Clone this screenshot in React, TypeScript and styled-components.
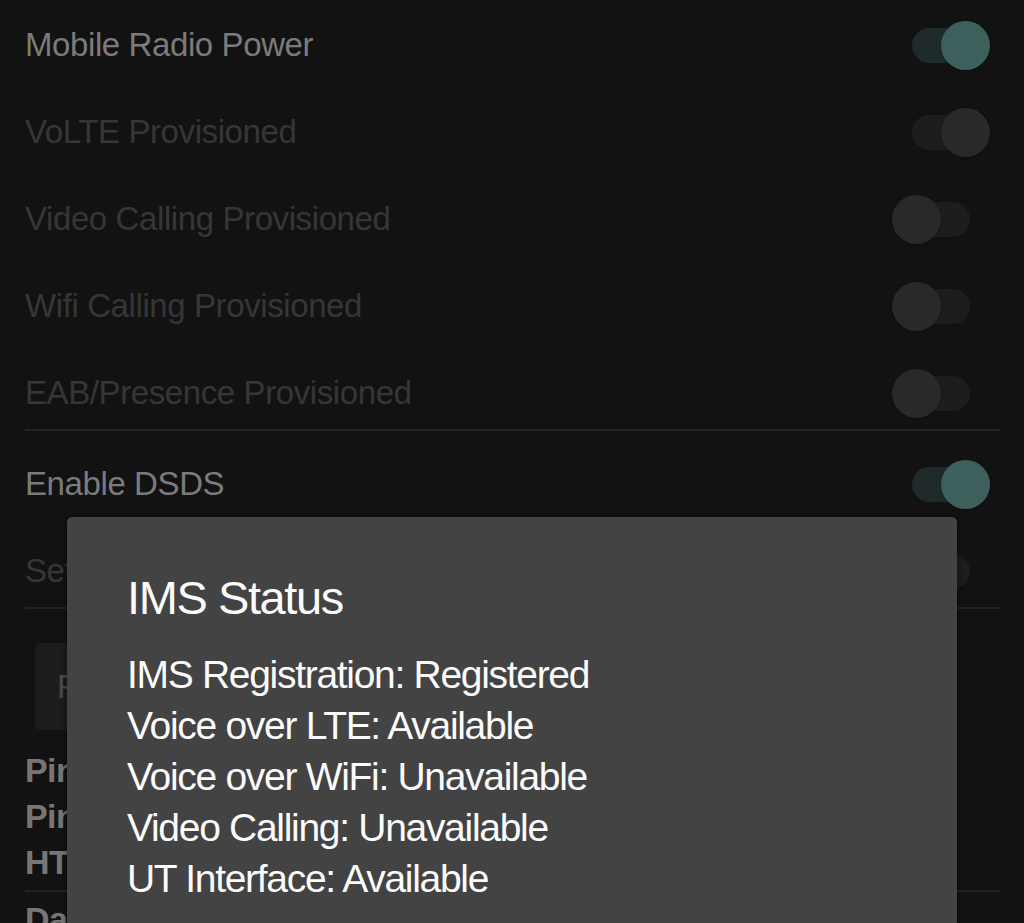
import React from "react";
import styled, { createGlobalStyle } from "styled-components";

const Global = createGlobalStyle`
  html, body {
    margin: 0;
    padding: 0;
    background: #121212;
    overflow: hidden;
  }
  body {
    font-family: "Liberation Sans", Arial, sans-serif;
  }
`;

const Screen = styled.div`
  position: relative;
  width: 1024px;
  height: 923px;
  overflow: hidden;
  background: #121212;
`;

const Section = styled.div<{ $top: number }>`
  display: flex;
  flex-direction: column;
  gap: 15px;
  padding: ${(p) => p.$top}px 24px 0 25px;
`;

const Row = styled.div`
  display: flex;
  align-items: center;
  justify-content: space-between;
  height: 72px;
  padding-right: 10px;
`;

const Label = styled.span<{ $disabled?: boolean }>`
  font-size: 33px;
  letter-spacing: -0.4px;
  color: ${(p) => (p.$disabled ? "#363636" : "#7b7b7b")};
  white-space: nowrap;
`;

const Divider = styled.div`
  height: 2px;
  margin: 0 24px 0 25px;
  background: #232323;
`;

const SwitchBox = styled.div`
  position: relative;
  display: flex;
  align-items: center;
  width: 98px;
  height: 49px;
  padding: 0 20px;
  box-sizing: border-box;
  flex: none;
`;

const Track = styled.div<{ $active: boolean }>`
  width: 58px;
  height: 35px;
  border-radius: 18px;
  background: ${(p) => (p.$active ? "#1f2b2a" : "#1d1d1d")};
`;

const Knob = styled.div<{ $on: boolean; $active: boolean }>`
  position: absolute;
  top: 0;
  left: ${(p) => (p.$on ? 49 : 0)}px;
  width: 49px;
  height: 49px;
  border-radius: 50%;
  background: ${(p) => (p.$active ? "#3d605d" : "#292929")};
  box-shadow: 0 1px 2px rgba(0, 0, 0, 0.35);
`;

const Switch = ({ on, active }: { on: boolean; active?: boolean }) => (
  <SwitchBox>
    <Track $active={!!active} />
    <Knob $on={on} $active={!!active} />
  </SwitchBox>
);

const Lower = styled.div`
  display: flex;
  flex-direction: column;
  padding: 34px 24px 0 25px;
`;

const PingButton = styled.div`
  display: flex;
  align-items: center;
  width: 340px;
  height: 87px;
  margin-left: 10px;
  padding-left: 22px;
  box-sizing: border-box;
  border-radius: 6px;
  background: #1c1c1c;
  font-size: 33px;
  color: #4a4a4a;
`;

const InfoList = styled.div`
  display: flex;
  flex-direction: column;
  margin-top: 17px;
`;

const InfoLine = styled.div`
  height: 46px;
  line-height: 46px;
  font-size: 34px;
  font-weight: 700;
  letter-spacing: -0.6px;
  color: #767676;
  white-space: nowrap;
`;

const LowerDivider = styled.div`
  height: 2px;
  margin: 5px 0 4px;
  background: #232323;
`;

const Dialog = styled.div`
  position: absolute;
  left: 67px;
  top: 517px;
  width: 890px;
  height: 520px;
  box-sizing: border-box;
  padding: 53px 60px 0;
  border-radius: 5px;
  background: #434343;
  box-shadow: 0 0 6px rgba(0, 0, 0, 0.5);
`;

const Title = styled.div`
  font-size: 47px;
  line-height: 56px;
  letter-spacing: -1.4px;
  color: #fbfbfb;
`;

const Body = styled.div`
  margin-top: 23px;
  display: flex;
  flex-direction: column;
`;

const Line = styled.div`
  font-size: 39px;
  line-height: 51px;
  letter-spacing: -1.3px;
  color: #fbfbfb;
  white-space: nowrap;
`;

const provisioning = [
  { label: "Mobile Radio Power", on: true, active: true, disabled: false },
  { label: "VoLTE Provisioned", on: true, active: false, disabled: true },
  { label: "Video Calling Provisioned", on: false, active: false, disabled: true },
  { label: "Wifi Calling Provisioned", on: false, active: false, disabled: true },
  { label: "EAB/Presence Provisioned", on: false, active: false, disabled: true },
];

const dsds = [
  { label: "Enable DSDS", on: true, active: true, disabled: false },
  { label: "Set Modem Config to DSDS", on: false, active: false, disabled: true },
];

const status = [
  "IMS Registration: Registered",
  "Voice over LTE: Available",
  "Voice over WiFi: Unavailable",
  "Video Calling: Unavailable",
  "UT Interface: Available",
];

export default function App() {
  return (
    <>
      <Global />
      <Screen>
        <Section $top={9}>
          {provisioning.map((r) => (
            <Row key={r.label}>
              <Label $disabled={r.disabled}>{r.label}</Label>
              <Switch on={r.on} active={r.active} />
            </Row>
          ))}
        </Section>
        <Divider />
        <Section $top={17}>
          {dsds.map((r) => (
            <Row key={r.label}>
              <Label $disabled={r.disabled}>{r.label}</Label>
              <Switch on={r.on} active={r.active} />
            </Row>
          ))}
        </Section>
        <Divider />
        <Lower>
          <PingButton>Run Ping Test</PingButton>
          <InfoList>
            <InfoLine>Ping Hostname(www.google.com) IPv4:</InfoLine>
            <InfoLine>Ping Hostname(www.google.com) IPv6:</InfoLine>
            <InfoLine>HTTP Client Test:</InfoLine>
          </InfoList>
          <LowerDivider />
          <InfoLine>Data Sent:</InfoLine>
        </Lower>
        <Dialog>
          <Title>IMS Status</Title>
          <Body>
            {status.map((s) => (
              <Line key={s}>{s}</Line>
            ))}
          </Body>
        </Dialog>
      </Screen>
    </>
  );
}
